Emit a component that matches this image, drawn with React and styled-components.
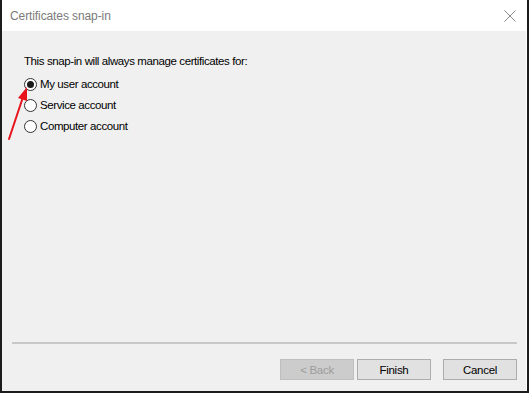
import React from 'react'
import styled, { createGlobalStyle } from 'styled-components'

const Global = createGlobalStyle`
  html, body { margin: 0; padding: 0; background: #ffffff; }
  body { font-family: "Liberation Sans", Arial, sans-serif; }
`

const options = [
  { label: 'My user account', checked: true },
  { label: 'Service account', checked: false },
  { label: 'Computer account', checked: false },
]

function Radio({ checked }) {
  return (
    <RadioCircle>
      {checked && <RadioDot />}
    </RadioCircle>
  )
}

function CloseIcon() {
  return (
    <svg width="12" height="12" viewBox="0 0 12 12">
      <path d="M0.5 0.5 L11.5 11.5 M11.5 0.5 L0.5 11.5" stroke="#8a8a8a" strokeWidth="1" fill="none" />
    </svg>
  )
}

function RedArrow() {
  return (
    <svg width="30" height="60" viewBox="0 0 30 60">
      <path d="M3 56 L17 14" stroke="#e8141c" strokeWidth="2" fill="none" strokeLinecap="round" />
      <path d="M21 4 L12 15 L21 18 Z" fill="#e8141c" />
    </svg>
  )
}

export default function App() {
  return (
    <>
      <Global />
      <Window>
        <TitleBar>
          <Title>Certificates snap-in</Title>
          <CloseButton><CloseIcon /></CloseButton>
        </TitleBar>
        <Body>
          <Content>
            <Intro>This snap-in will always manage certificates for:</Intro>
            <OptionList>
              {options.map(o => (
                <Option key={o.label}>
                  <Radio checked={o.checked} />
                  <span>{o.label}</span>
                </Option>
              ))}
            </OptionList>
            <ArrowWrap><RedArrow /></ArrowWrap>
          </Content>
          <Separator />
          <ButtonRow>
            <Button disabled $w={74}>&lt; Back</Button>
            <Button $w={74}>Finish</Button>
            <Button $w={74} $gap={12}>Cancel</Button>
          </ButtonRow>
        </Body>
      </Window>
    </>
  )
}

const Window = styled.div`
  width: 529px;
  height: 393px;
  box-sizing: border-box;
  display: flex;
  flex-direction: column;
  background: #ffffff;
  border-left: 2px solid #1c1c1c;
  border-right: 2px solid #1c1c1c;
  border-bottom: 2px solid #1c1c1c;
  position: relative;
`

const TitleBar = styled.div`
  height: 31px;
  display: flex;
  align-items: center;
  justify-content: space-between;
  padding: 0 10px 0 8px;
  background: #ffffff;
`

const Title = styled.div`
  font-size: 12px;
  letter-spacing: -0.1px;
  color: #7a7a7a;
`

const CloseButton = styled.div`
  width: 14px;
  height: 14px;
  display: flex;
  align-items: center;
  justify-content: center;
`

const Body = styled.div`
  flex: 1;
  background: #f0f0f0;
  display: flex;
  flex-direction: column;
  margin-right: 1px;
`

const Content = styled.div`
  flex: 1;
  padding: 22px 0 0 22px;
  position: relative;
`

const Intro = styled.div`
  font-size: 11.5px;
  letter-spacing: -0.4px;
  color: #000000;
  line-height: 16px;
  margin-bottom: 7px;
`

const OptionList = styled.div`
  display: flex;
  flex-direction: column;
  gap: 5px;
`

const Option = styled.div`
  display: flex;
  align-items: center;
  gap: 3px;
  font-size: 11.5px;
  letter-spacing: -0.4px;
  line-height: 16px;
  color: #000000;
`

const RadioCircle = styled.span`
  width: 13px;
  height: 13px;
  box-sizing: border-box;
  border: 1px solid #333333;
  border-radius: 50%;
  background: #ffffff;
  display: flex;
  align-items: center;
  justify-content: center;
`

const RadioDot = styled.span`
  width: 7px;
  height: 7px;
  border-radius: 50%;
  background: #1a1a1a;
`

const ArrowWrap = styled.div`
  position: absolute;
  left: 4px;
  top: 52px;
`

const Separator = styled.div`
  height: 2px;
  background: #c8c8c8;
  margin: 0 9px 0 10px;
`

const ButtonRow = styled.div`
  display: flex;
  justify-content: flex-end;
  padding: 15px 9px 11px 0;
`

const Button = styled.button`
  width: ${p => p.$w}px;
  height: 21px;
  margin-left: ${p => (p.$gap ? p.$gap : 3)}px;
  box-sizing: border-box;
  font-family: "Liberation Sans", Arial, sans-serif;
  font-size: 11.5px;
  letter-spacing: -0.3px;
  padding: 0;
  color: #000000;
  background: #e1e1e1;
  border: 1px solid #adadad;
  &:disabled {
    color: #9c9c9c;
    background: #cccccc;
    border-color: #bfbfbf;
  }
`
